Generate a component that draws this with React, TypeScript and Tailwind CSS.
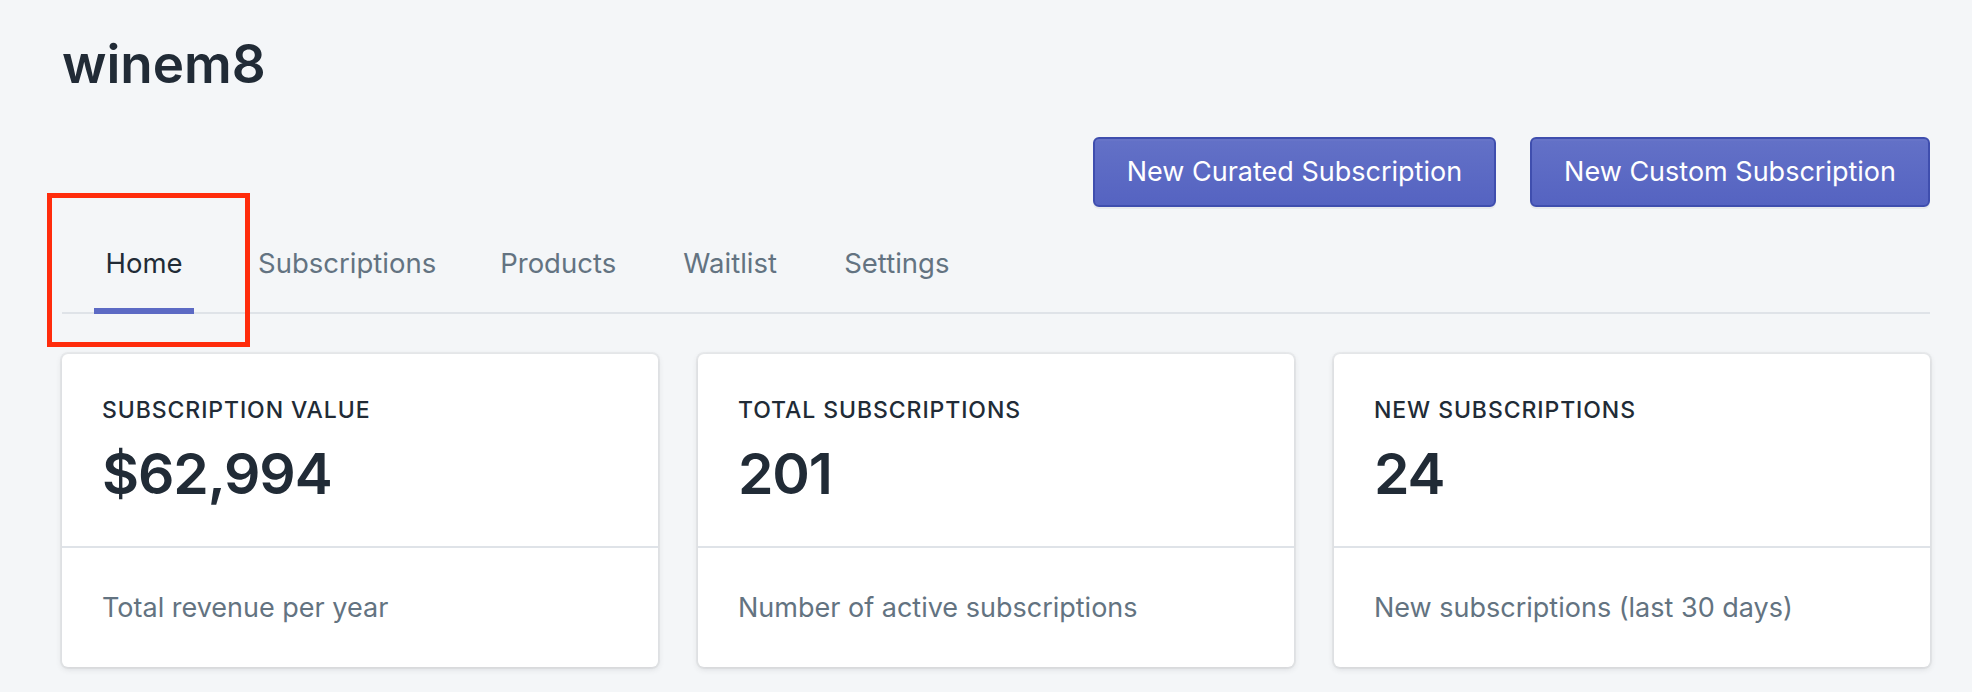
const TABS = ["Home", "Subscriptions", "Products", "Waitlist", "Settings"];

const STATS = [
  {
    label: "Subscription value",
    value: "$62,994",
    note: "Total revenue per year",
  },
  {
    label: "Total subscriptions",
    value: "201",
    note: "Number of active subscriptions",
  },
  {
    label: "New subscriptions",
    value: "24",
    note: "New subscriptions (last 30 days)",
  },
];

function PrimaryButton({ children }: { children: string }) {
  return (
    <button className="h-[70px] px-[32px] rounded-[6px] border-2 border-[#3f4eae] bg-gradient-to-b from-[#6371c7] to-[#5563c1] text-white text-[27px] leading-[40px] shadow-[inset_0_2px_0_0_#6774c8,0_2px_0_0_rgba(22,29,37,0.05)]">
      {children}
    </button>
  );
}

export default function App() {
  return (
    <div
      className="relative min-h-screen bg-[#f4f6f8] pl-[62px] pr-[42px] pt-[32px] pb-[25px] text-[#212b36]"
      style={{ fontFamily: "Inter, 'Noto Sans', sans-serif" }}
    >
      <h1 className="text-[53px] leading-[64px] font-semibold">winem8</h1>

      <div className="mt-[41px] flex justify-end gap-[34px]">
        <PrimaryButton>New Curated Subscription</PrimaryButton>
        <PrimaryButton>New Custom Subscription</PrimaryButton>
      </div>

      <div className="mt-[7px] flex border-b-2 border-[#dfe3e8]">
        {TABS.map((tab, i) => (
          <div key={tab} className="px-[32px]">
            <div
              className={
                "relative min-w-[100px] text-center py-[29px] text-[27.5px] leading-[40px] " +
                (i === 0 ? "text-[#212b36]" : "text-[#637381]")
              }
            >
              {tab}
              {i === 0 && (
                <span className="absolute left-0 right-0 bottom-[-2px] h-[6px] bg-[#5c6ac4]" />
              )}
            </div>
          </div>
        ))}
      </div>

      <div className="mt-[40px] grid grid-cols-3 gap-[40px]">
        {STATS.map((s) => (
          <div
            key={s.label}
            className="bg-white rounded-[6px] shadow-[0_0_0_2px_rgba(63,63,68,0.05),0_2px_6px_0_rgba(63,63,68,0.15)]"
          >
            <div className="h-[192px] px-[40px] pt-[42px]">
              <div className="text-[23px] leading-[28px] font-medium uppercase tracking-[0.04em]">
                {s.label}
              </div>
              <div className="mt-[16px] text-[57px] leading-[68px] font-semibold tracking-[-0.02em]">
                {s.value}
              </div>
            </div>
            <div className="h-[121px] border-t-2 border-[#dfe3e8] px-[40px] flex items-center text-[27px] leading-[40px] text-[#637381]">
              {s.note}
            </div>
          </div>
        ))}
      </div>

      <div className="absolute left-[47px] top-[193px] w-[203px] h-[154px] border-[5px] border-[#ff2c0c]" />
    </div>
  );
}
